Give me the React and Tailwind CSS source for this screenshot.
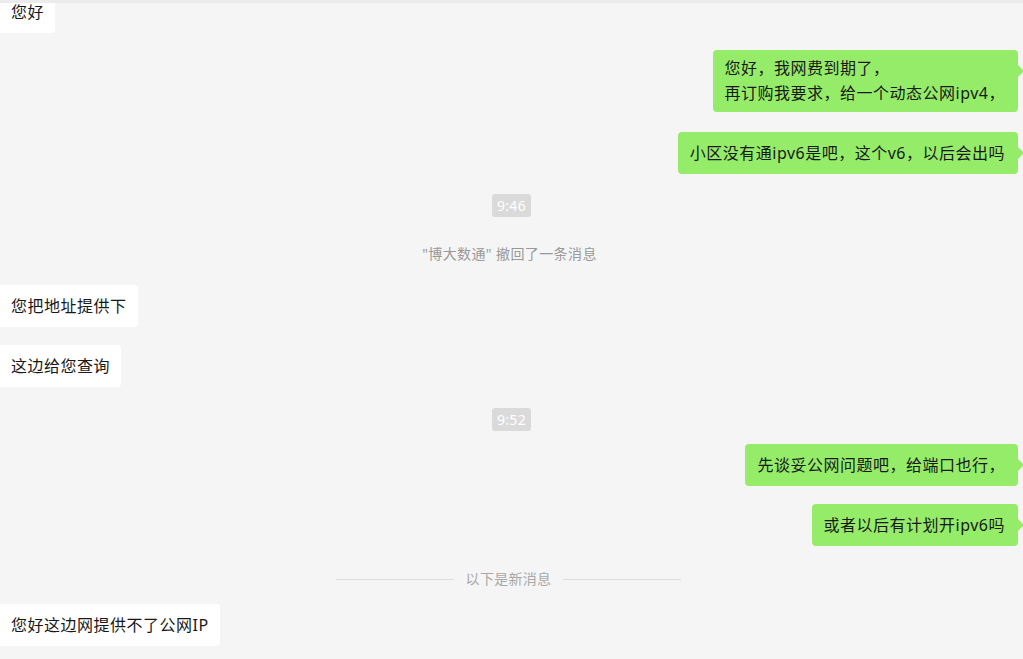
const font = { fontFamily: '"Noto Sans", "Noto Sans CJK SC", sans-serif' }

function Left({ text, className = '' }) {
  return (
    <div className={`flex ${className}`}>
      <div className="-ml-1 rounded-[4px] bg-white pl-[15px] pr-[11px] py-[9px] text-[16px] leading-[24px] tracking-[0.5px] text-[#191919]">
        {text}
      </div>
    </div>
  )
}

function Right({ lines, className = '' }) {
  const multi = lines.length > 1
  return (
    <div className={`flex justify-end pr-[5px] ${className}`}>
      <div
        className={`relative rounded-[4px] bg-[#95ec69] pl-[12px] pr-[13px] text-[16px] tracking-[0.5px] text-[#191919] ${
          multi ? 'py-[6px] leading-[25px]' : 'py-[9px] leading-[24px]'
        }`}
      >
        {lines.map((l, i) => (
          <div key={i}>{l}</div>
        ))}
        <span className="absolute right-[-6px] top-[15px] h-0 w-0 border-y-[6px] border-l-[6px] border-y-transparent border-l-[#95ec69]" />
      </div>
    </div>
  )
}

function Time({ t, className = '' }) {
  return (
    <div className={`flex justify-center ${className}`}>
      <span className="rounded-[3px] bg-[#dadada] px-[5px] text-[14px] leading-[23px] tracking-[0.3px] text-white">{t}</span>
    </div>
  )
}

export default function App() {
  return (
    <div className="h-[659px] w-[1023px] overflow-hidden border-t-[3px] border-[#ebebeb] bg-[#f5f5f5]" style={font}>
      <Left text="您好" className="-mt-[12px]" />
      <Right className="mt-[17px]" lines={['您好，我网费到期了，', '再订购我要求，给一个动态公网ipv4，']} />
      <Right className="mt-[20px]" lines={['小区没有通ipv6是吧，这个v6，以后会出吗']} />
      <Time t="9:46" className="mt-[20px]" />
      <div className="mt-[27px] pr-[4px] text-center text-[14px] leading-[20px] tracking-[0.4px] text-[#999999]">
        "博大数通" 撤回了一条消息
      </div>
      <Left text="您把地址提供下" className="mt-[21px]" />
      <Left text="这边给您查询" className="mt-[18px]" />
      <Time t="9:52" className="mt-[21px]" />
      <Right className="mt-[13px]" lines={['先谈妥公网问题吧，给端口也行，']} />
      <Right className="mt-[18px]" lines={['或者以后有计划开ipv6吗']} />
      <div className="mt-[23px] flex items-center justify-center gap-[12px] pr-[6px]">
        <span className="h-px w-[118px] bg-[#dcdcdc]" />
        <span className="text-[14px] leading-[20px] tracking-[0.3px] text-[#a8a8a8]">以下是新消息</span>
        <span className="h-px w-[118px] bg-[#dcdcdc]" />
      </div>
      <Left text="您好这边网提供不了公网IP" className="mt-[15px]" />
    </div>
  )
}
